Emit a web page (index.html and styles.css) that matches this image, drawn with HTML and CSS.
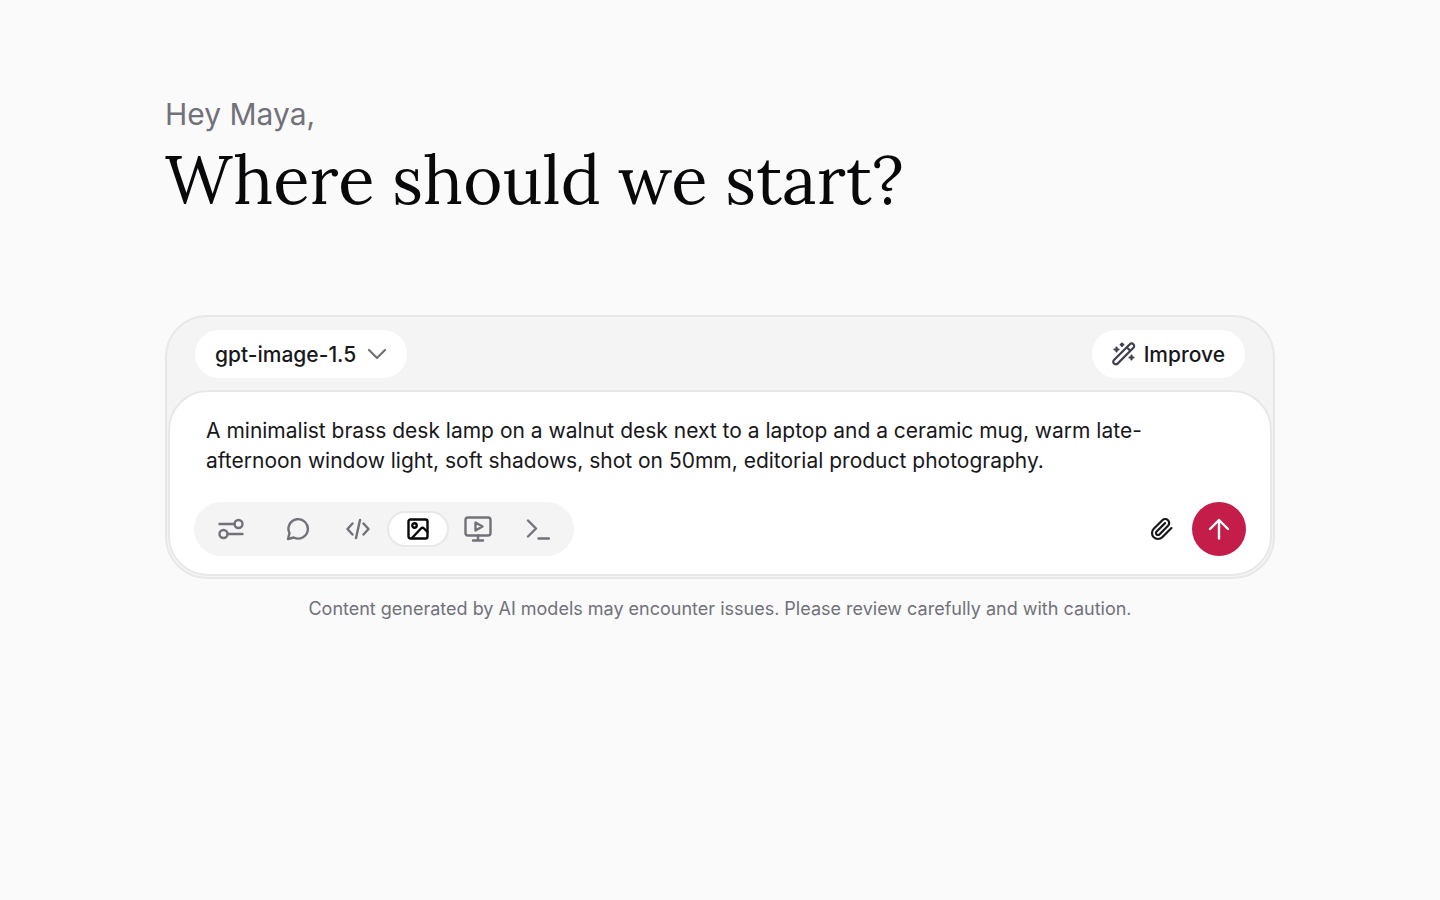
FILE: index.html
```html
<!DOCTYPE html>
<html lang="en">
<head>
<meta charset="utf-8">
<meta name="viewport" content="width=device-width, initial-scale=1">
<title>New chat</title>
<link rel="stylesheet" href="styles.css">
</head>
<body>
<main class="page">
  <header class="greeting">
    <p class="hello">Hey Maya,</p>
    <h1 class="title">Where should we start?</h1>
  </header>
  <form class="composer">
    <div class="composer-head">
      <button class="pill model" type="button" aria-haspopup="listbox">gpt-image-1.5
        <svg class="chevron" viewBox="0 0 20 20" aria-hidden="true"><path d="M2 6l8 8 8-8"/></svg>
      </button>
      <button class="pill improve" type="button">
        <svg class="icon wand" viewBox="0 0 24 24" aria-hidden="true"><path d="M2 18 17.800 2.200a2.500 2.500 0 0 1 3.600 0 2.500 2.500 0 0 1 0 3.600L5.600 21.600a2.500 2.500 0 0 1-3.600 0 2.500 2.500 0 0 1 0-3.600ZM15.500 6l2 2M4.500 5.500v4M2.500 7.500h4M10 1.500v2.500M8.700 2.700h2.600M19.500 13.500v4M17.500 15.500h4"/></svg>
        Improve
      </button>
    </div>
    <div class="composer-body">
      <textarea class="prompt" rows="2" aria-label="Prompt">A minimalist brass desk lamp on a walnut desk next to a laptop and a ceramic mug, warm late-afternoon window light, soft shadows, shot on 50mm, editorial product photography.</textarea>
      <div class="composer-tools">
        <div class="modes" role="toolbar" aria-label="Mode">
          <button class="mode settings" type="button" aria-label="Settings"><svg class="icon sliders" viewBox="0 0 26 22" aria-hidden="true"><path d="M1.500 6H16.500M9.500 16H24.500"/><circle cx="20.500" cy="6" r="4"/><circle cx="5.500" cy="16" r="4"/></svg></button>
          <button class="mode" type="button" aria-label="Chat"><svg class="icon" viewBox="0 0 24 24" aria-hidden="true"><path d="M3.500 16.200A9.700 9.700 0 1 1 7.800 20.500L2 22Z"/></svg></button>
          <button class="mode" type="button" aria-label="Code"><svg class="icon" viewBox="0 0 24 24" aria-hidden="true"><path d="M6.500 6.500 1.500 12l5 5.500M17.500 6.500 22.500 12l-5 5.500M14 3l-4 18"/></svg></button>
          <button class="mode selected" type="button" aria-label="Image" aria-pressed="true"><svg class="icon" viewBox="0 0 24 24" aria-hidden="true"><rect x="2.500" y="2.500" width="19" height="19" rx="2"/><circle cx="8.500" cy="8.500" r="2.200"/><path d="m6 21 9-9.500q1.500-1.500 3 0l3.500 3.500"/></svg></button>
          <button class="mode" type="button" aria-label="Video"><svg class="icon monitor" viewBox="0 0 28 26" aria-hidden="true"><rect x="1.500" y="1.500" width="25" height="18" rx="2.500"/><path d="M14 19.500V24M9 24.500h10M11.500 6.500v8l7-4Z"/></svg></button>
          <button class="mode" type="button" aria-label="Terminal"><svg class="icon" viewBox="0 0 24 24" aria-hidden="true"><path d="m2 3.500 8 8-8 8M12.500 21.500H23"/></svg></button>
        </div>
        <div class="actions">
          <button class="attach" type="button" aria-label="Attach file"><svg class="icon" viewBox="0 0 24 24" aria-hidden="true"><path d="m21.440 11.050-9.190 9.190a6 6 0 0 1-8.490-8.490l8.570-8.570A4 4 0 1 1 18 8.840l-8.590 8.570a2 2 0 0 1-2.830-2.830l8.490-8.480"/></svg></button>
          <button class="send" type="submit" aria-label="Send"><svg class="icon arrow" viewBox="0 0 24 24" aria-hidden="true"><path d="M12 21.500V3M3 12l9-9 9 9"/></svg></button>
        </div>
      </div>
    </div>
  </form>
  <p class="notice">Content generated by AI models may encounter issues. Please review carefully and with caution.</p>
</main>
</body>
</html>
```
FILE: styles.css
```css
* { box-sizing: border-box; }
body {
  margin: 0;
  background: #fafafa;
  color: #18181b;
  font-family: Inter, "Liberation Sans", sans-serif;
}
button, textarea { font: inherit; color: inherit; }
button { border: 0; padding: 0; background: none; cursor: pointer; }
.page { max-width: 1150px; margin: 0 auto; padding: 96px 20px 40px; }
.greeting { margin-bottom: 92px; }
.hello { margin: 0; color: #71717a; font-size: 30px; line-height: 36px; }
.title {
  margin: 4px 0 0;
  color: #09090b;
  font-family: Lora, "Liberation Serif", serif;
  font-size: 67px;
  font-weight: 400;
  line-height: 87px;
}
.composer { border: 2px solid #e8e8e9; border-radius: 42px; background: #f4f4f5; padding: 0 1px 1px; }
.composer-head {
  display: flex;
  justify-content: space-between;
  align-items: center;
  padding: 13px 27px 12px;
}
.pill {
  display: flex;
  align-items: center;
  height: 48px;
  padding: 0 20px;
  border-radius: 24px;
  background: #fff;
  font-size: 21px;
  font-weight: 500;
}
.model { gap: 11px; }
.improve { gap: 8px; }
.icon, .chevron {
  flex: none;
  width: 24px;
  height: 24px;
  fill: none;
  stroke: currentColor;
  stroke-width: 2.2;
  stroke-linecap: round;
  stroke-linejoin: round;
}
.chevron { width: 20px; height: 20px; color: #71717a; }
.wand { color: #3f3f50; }
.composer-body {
  border: 2px solid #e8e8e9;
  border-radius: 40px;
  background: #fff;
  padding: 24px 24px 18px;
}
.prompt {
  display: block;
  width: 100%;
  height: 60px;
  margin-bottom: 26px;
  padding: 0 12px;
  border: 0;
  outline: 0;
  resize: none;
  overflow: hidden;
  background: none;
  font-size: 21px;
  line-height: 30px;
}
.composer-tools, .modes, .actions { display: flex; align-items: center; }
.composer-tools { justify-content: space-between; }
.modes { height: 54px; padding: 0 6px; border-radius: 27px; background: #f4f4f5; color: #71717a; }
.mode {
  display: grid;
  place-items: center;
  width: 60px;
  height: 36px;
  border: 2px solid transparent;
  border-radius: 18px;
}
.settings { width: 62px; margin-right: 6px; }
.selected { width: 62px; margin: 0 -1px; border-color: #e8e8e9; background: #fff; color: #09090b; }
.sliders { width: 26px; height: 22px; }
.monitor { width: 28px; height: 26px; }
.modes .icon, .send .icon { stroke-width: 2.4; }
.attach { display: grid; place-items: center; width: 36px; height: 36px; }
.actions { gap: 12px; }
.send {
  display: grid;
  place-items: center;
  width: 54px;
  height: 54px;
  border-radius: 50%;
  background: #c51d49;
  color: #fff;
}
.notice { margin: 18px 0 0; color: #71717a; font-size: 18px; line-height: 24px; text-align: center; }
```
